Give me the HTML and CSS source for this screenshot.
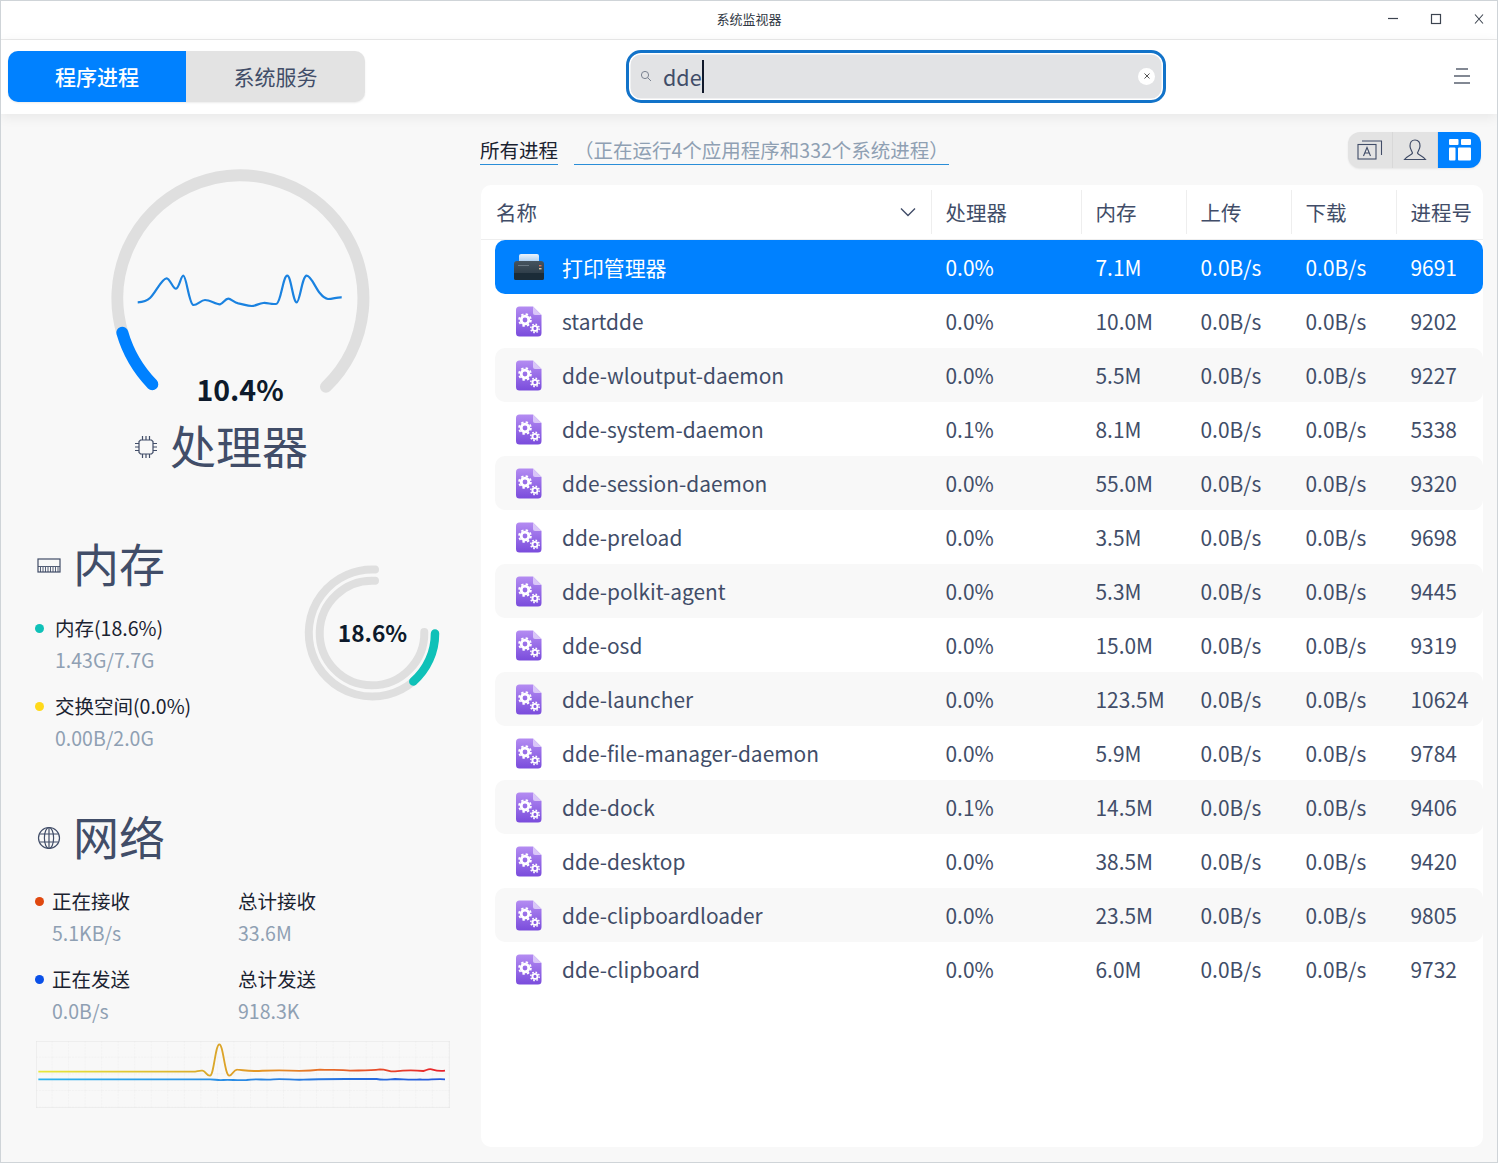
FILE: index.html
```html
<!DOCTYPE html>
<html lang="zh-CN">
<head>
    <meta charset="UTF-8">
    <meta name="viewport" content="width=device-width, initial-scale=1.0">
    <title>系统监视器</title>
    <link rel="stylesheet" href="styles.css">
</head>
<body>
    <!-- shared icons and gradients -->
    <svg class="sprites" aria-hidden="true">
        <defs>
            <linearGradient id="doc-fill" x1="0" y1="0" x2="0" y2="1">
                <stop offset="0" stop-color="#b48cf2"/>
                <stop offset="1" stop-color="#7a4cdc"/>
            </linearGradient>
            <linearGradient id="printer-body" x1="0" y1="0" x2="0" y2="1">
                <stop offset="0" stop-color="#46545f"/>
                <stop offset="1" stop-color="#22323e"/>
            </linearGradient>
            <linearGradient id="printer-paper" x1="0" y1="0" x2="0" y2="1">
                <stop offset="0" stop-color="#eaf3fc"/>
                <stop offset="1" stop-color="#a9cdf0"/>
            </linearGradient>
            <linearGradient id="net-recv" gradientUnits="userSpaceOnUse" x1="25" y1="0" x2="1245" y2="0">
                <stop offset="0" stop-color="#e6e83c"/>
                <stop offset="0.42" stop-color="#d9a92a"/>
                <stop offset="0.55" stop-color="#e59524"/>
                <stop offset="1" stop-color="#e8202c"/>
            </linearGradient>
            <linearGradient id="net-send" gradientUnits="userSpaceOnUse" x1="25" y1="0" x2="1245" y2="0">
                <stop offset="0" stop-color="#2cb4ee"/>
                <stop offset="0.5" stop-color="#2a8ae4"/>
                <stop offset="1" stop-color="#2458dc"/>
            </linearGradient>
            <pattern id="net-grid" patternUnits="userSpaceOnUse" x="18" y="15" width="49.6" height="50">
                <path d="M49.6 0V50M0 50H49.6" fill="none" stroke="#e6e6e6" stroke-width="2" stroke-dasharray="6 3"/>
            </pattern>
            <symbol id="doc-icon" viewBox="0 0 26 31">
                <path d="M3.5 .5H17L25.5 9V27a3.5 3.5 0 0 1-3.5 3.5H3.5A3.5 3.5 0 0 1 0 27V4A3.5 3.5 0 0 1 3.5 .5Z" fill="url(#doc-fill)"/>
                <path d="M17 .5L25.5 9H19a2 2 0 0 1-2-2Z" fill="#d9c6f8"/>
                <circle cx="9" cy="14" r="3.8" fill="none" stroke="#fff" stroke-width="2.8"/>
                <circle cx="9" cy="14" r="5.9" fill="none" stroke="#fff" stroke-width="1.8" stroke-dasharray="2.4 2.23"/>
                <circle cx="19" cy="22.4" r="2.5" fill="none" stroke="#fff" stroke-width="1.9"/>
                <circle cx="19" cy="22.4" r="4.2" fill="none" stroke="#fff" stroke-width="1.5" stroke-dasharray="1.6 1.7"/>
            </symbol>
            <symbol id="printer-icon" viewBox="0 0 32 28">
                <path d="M6 9V3a2 2 0 0 1 2-2H24a2 2 0 0 1 2 2V9Z" fill="url(#printer-paper)"/>
                <path d="M4 8H28a3 3 0 0 1 3 3V25a2 2 0 0 1-2 2H3a2 2 0 0 1-2-2V11A3 3 0 0 1 4 8Z" fill="url(#printer-body)"/>
                <path d="M1 20H31V25a2 2 0 0 1-2 2H3a2 2 0 0 1-2-2Z" fill="#1b2c38"/>
                <rect x="5" y="12" width="11" height="1" fill="#6a7883"/>
                <rect x="26" y="12" width="2.5" height="1.4" fill="#d8705a"/>
                <rect x="26" y="15" width="2.5" height="1.4" fill="#d9c7a0"/>
            </symbol>
        </defs>
    </svg>

    <div class="window">
        <div class="titlebar">
            <span class="titlebar__name">系统监视器</span>
            <div class="titlebar__btns">
                <svg width="12" height="12" viewBox="0 0 12 12"><path d="M1 5.5H11" stroke="#3c4450" stroke-width="1.2"/></svg>
                <svg width="12" height="12" viewBox="0 0 12 12"><rect x="1.5" y="1.5" width="9" height="9" fill="none" stroke="#3c4450" stroke-width="1.2"/></svg>
                <svg width="12" height="12" viewBox="0 0 12 12"><path d="M2 1.5L10 10.5M10 1.5L2 10.5" stroke="#3c4450" stroke-width="1.1"/></svg>
            </div>
        </div>

        <div class="toolbar">
            <div class="tabs">
                <div class="tabs__item tabs__item--on">程序进程</div>
                <div class="tabs__item">系统服务</div>
            </div>
            <div class="search">
                <svg class="search__icon" width="12" height="12" viewBox="0 0 12 12"><circle cx="5" cy="5" r="3.6" fill="none" stroke="#7a8290" stroke-width="1"/><path d="M7.7 7.7L11 11" stroke="#7a8290" stroke-width="1"/></svg>
                <span class="search__text">dde</span><span class="search__caret"></span>
                <span class="search__clear">
                    <svg width="8" height="8" viewBox="0 0 8 8"><path d="M1.5 1.5L6.5 6.5M6.5 1.5L1.5 6.5" stroke="#555" stroke-width="1"/></svg>
                </span>
            </div>
            <svg class="menu-btn" width="16" height="16" viewBox="0 0 16 16"><path d="M2 1H14M0 8H16M0 15H16" stroke="#5a6270" stroke-width="1.5"/></svg>
        </div>

        <div class="content">
            <div class="sidebar">
                <div class="cpu-gauge">
                    <svg width="300" height="250" viewBox="90 150 300 250">
                        <path d="M122.3 332.7A123 123 0 1 1 326 386.7" fill="none" stroke="#dfdfdf" stroke-width="12" stroke-linecap="round"/>
                        <path d="M122.3 332.7A123 123 0 0 0 152.3 384.3" fill="none" stroke="#0081ff" stroke-width="12" stroke-linecap="round"/>
                        <path d="M137.7 302.3C143 302 147 301 150 298C156 292 162 278 166.7 278.3C170 278.5 173 289 176 288.7C179 288.4 181 275.5 183.3 275.7C186.5 276 189 304 193.3 305C197 305.5 201 300 205 300C210 300 216 304.5 220 304.3C223 304 225 298.7 228.3 298.7C231 298.7 234 302.5 238.3 303.3C243 304 247 306 251.7 306C255 306 259 303.5 263.3 303C268 302.5 272 305 276.7 303.7C281 302 283 275.7 287.3 275.7C291 275.7 293 302.3 296.7 302.3C300 302.3 302 275.7 306.7 275.7C311 275.7 316 289 320 293.3C323 297 325 298.7 328 299C333 299 337 297 341.7 297.3" fill="none" stroke="#1a82e0" stroke-width="2.2"/>
                    </svg>
                    <span class="cpu-gauge__val">10.4%</span>
                </div>
                <div class="section-title section-title--cpu">
                    <svg width="24" height="24" viewBox="0 0 24 24" fill="none" stroke="#414d68" stroke-width="1.2">
                        <path d="M6.5 5H17.5L19 6.5V17.5L17.5 19H6.5L5 17.5V6.5Z"/>
                        <path d="M8.5 1V5M12 1V5M15.5 1V5M8.5 19V23M12 19V23M15.5 19V23M1 8.5H5M1 12H5M1 15.5H5M19 8.5H23M19 12H23M19 15.5H23"/>
                    </svg>
                    <h2>处理器</h2>
                </div>

                <div class="memory">
                    <div class="memory__info">
                        <div class="section-title">
                            <svg width="24" height="15" viewBox="0 0 24 15" fill="none" stroke="#414d68" stroke-width="1.2">
                                <rect x="1" y="1" width="22" height="13"/>
                                <path d="M1 8.5H23M3.5 9V14M6 9V14M8.5 9V14M11 9V14M13.5 9V14M16 9V14M18.5 9V14M21 9V14" stroke-width=".9"/>
                            </svg>
                            <h2>内存</h2>
                        </div>
                        <div class="legend">
                            <div class="stat">
                                <div class="stat__name"><i class="dot dot--teal"></i>内存(18.6%)</div>
                                <div class="stat__val">1.43G/7.7G</div>
                            </div>
                            <div class="stat">
                                <div class="stat__name"><i class="dot dot--yellow"></i>交换空间(0.0%)</div>
                                <div class="stat__val">0.00B/2.0G</div>
                            </div>
                        </div>
                    </div>
                    <div class="mem-ring">
                        <svg width="145" height="145" viewBox="300 560 145 145">
                            <path d="M375 569.6A63.5 63.5 0 1 0 413.3 681.5" fill="none" stroke="#dfdfdf" stroke-width="8" stroke-linecap="round"/>
                            <path d="M375 580.8A52.3 52.3 0 1 0 424.3 632" fill="none" stroke="#dfdfdf" stroke-width="8" stroke-linecap="round"/>
                            <path d="M435 633.5A63.5 63.5 0 0 1 413.3 681.5" fill="none" stroke="#0fc1b8" stroke-width="8.5" stroke-linecap="round"/>
                        </svg>
                        <span class="mem-ring__val">18.6%</span>
                    </div>
                </div>

                <div class="network">
                    <div class="section-title">
                        <svg width="24" height="24" viewBox="0 0 24 24" fill="none" stroke="#414d68" stroke-width="1.2">
                            <circle cx="12" cy="12" r="10.5"/>
                            <ellipse cx="12" cy="12" rx="4.6" ry="10.5"/>
                            <path d="M12 1.5V22.5M2.5 8H21.5M2.5 16H21.5"/>
                        </svg>
                        <h2>网络</h2>
                    </div>
                    <div class="net-stats">
                        <div class="stat">
                            <div class="stat__name stat__name--net"><i class="dot dot--orange"></i>正在接收</div>
                            <div class="stat__val stat__val--net">5.1KB/s</div>
                        </div>
                        <div class="stat">
                            <div class="stat__name">总计接收</div>
                            <div class="stat__val">33.6M</div>
                        </div>
                        <div class="stat">
                            <div class="stat__name stat__name--net"><i class="dot dot--blue"></i>正在发送</div>
                            <div class="stat__val stat__val--net">0.0B/s</div>
                        </div>
                        <div class="stat">
                            <div class="stat__name">总计发送</div>
                            <div class="stat__val">918.3K</div>
                        </div>
                    </div>
                    <svg class="net-chart" width="414" height="67" viewBox="18 15 1242 201">
                        <rect x="18" y="15" width="1242" height="201" fill="url(#net-grid)" stroke="#e4e4e4" stroke-width="3"/>
                        <path d="M25 107H490C500 107 510 102 518 104C528 106 530 120 540 119C552 118 556 25 568 25C580 25 584 119 598 119C608 119 610 100 622 101C640 102 650 106 680 105C710 104 740 102 780 104C810 105 840 105 870 101C900 103 930 100 960 104C990 103 1020 104 1050 100C1070 100 1080 108 1095 106C1120 103 1150 102 1180 105C1190 103 1195 97 1205 100C1215 103 1225 107 1245 104" fill="none" stroke="url(#net-recv)" stroke-width="5.5"/>
                        <path d="M25 130H540C555 130 565 134 580 132C600 130 620 134 650 132C680 127 700 133 730 130C760 127 790 133 820 131C860 128 920 129 1040 129C1060 133 1075 130 1095 129C1120 129 1140 133 1170 130C1190 133 1215 128 1245 130" fill="none" stroke="url(#net-send)" stroke-width="5.5"/>
                    </svg>
                </div>
            </div>

            <div class="main">
                <div class="main__head">
                    <span class="main__label main__label--title">所有进程</span>
                    <span class="main__label main__label--sub">（正在运行4个应用程序和332个系统进程）</span>
                    <div class="view-toggle">
                        <div class="view-toggle__btn">
                            <svg width="26" height="20" viewBox="0 0 26 20" fill="none" stroke="#414d68" stroke-width="1.1">
                                <rect x="1" y="4.5" width="18" height="14.5"/>
                                <path d="M5 1H24.5V15"/>
                                <path d="M6.5 16L10 7.5L13.5 16M7.8 13H12.2"/>
                            </svg>
                        </div>
                        <div class="view-toggle__btn">
                            <svg width="24" height="22" viewBox="0 0 24 22" fill="none" stroke="#414d68" stroke-width="1.2">
                                <path d="M12 1C8 1 7 4 7 7C7 10 9 12 9.5 14C9 16 4 17 1.5 20.5H22.5C20 17 15 16 14.5 14C15 12 17 10 17 7C17 4 16 1 12 1Z"/>
                            </svg>
                        </div>
                        <div class="view-toggle__btn view-toggle__btn--on">
                            <svg width="22" height="22" viewBox="0 0 22 22" fill="#fff">
                                <rect x="0" y="0" width="9.5" height="6" rx="1"/>
                                <rect x="12" y="0" width="10" height="6" rx="1"/>
                                <rect x="0" y="8.5" width="6.5" height="13" rx="1"/>
                                <rect x="9" y="8.5" width="13" height="13" rx="1"/>
                            </svg>
                        </div>
                    </div>
                </div>

                <div class="proc-table">
                    <div class="proc-head">
                        <div class="proc-head__cell proc-head__cell--name">名称
                            <svg width="16" height="10" viewBox="0 0 16 10"><path d="M1 1.5L8 8.5L15 1.5" fill="none" stroke="#414d68" stroke-width="1.4"/></svg>
                        </div>
                        <div class="proc-head__cell">处理器</div>
                        <div class="proc-head__cell">内存</div>
                        <div class="proc-head__cell">上传</div>
                        <div class="proc-head__cell">下载</div>
                        <div class="proc-head__cell">进程号</div>
                    </div>

                    <div class="proc-row proc-row--on">
                        <div class="proc-row__name"><span class="proc-row__icon"><svg width="32" height="28"><use href="#printer-icon"/></svg></span>打印管理器</div>
                        <div>0.0%</div><div>7.1M</div><div>0.0B/s</div><div>0.0B/s</div><div>9691</div>
                    </div>
                    <div class="proc-row">
                        <div class="proc-row__name"><span class="proc-row__icon"><svg width="26" height="31"><use href="#doc-icon"/></svg></span>startdde</div>
                        <div>0.0%</div><div>10.0M</div><div>0.0B/s</div><div>0.0B/s</div><div>9202</div>
                    </div>
                    <div class="proc-row">
                        <div class="proc-row__name"><span class="proc-row__icon"><svg width="26" height="31"><use href="#doc-icon"/></svg></span>dde-wloutput-daemon</div>
                        <div>0.0%</div><div>5.5M</div><div>0.0B/s</div><div>0.0B/s</div><div>9227</div>
                    </div>
                    <div class="proc-row">
                        <div class="proc-row__name"><span class="proc-row__icon"><svg width="26" height="31"><use href="#doc-icon"/></svg></span>dde-system-daemon</div>
                        <div>0.1%</div><div>8.1M</div><div>0.0B/s</div><div>0.0B/s</div><div>5338</div>
                    </div>
                    <div class="proc-row">
                        <div class="proc-row__name"><span class="proc-row__icon"><svg width="26" height="31"><use href="#doc-icon"/></svg></span>dde-session-daemon</div>
                        <div>0.0%</div><div>55.0M</div><div>0.0B/s</div><div>0.0B/s</div><div>9320</div>
                    </div>
                    <div class="proc-row">
                        <div class="proc-row__name"><span class="proc-row__icon"><svg width="26" height="31"><use href="#doc-icon"/></svg></span>dde-preload</div>
                        <div>0.0%</div><div>3.5M</div><div>0.0B/s</div><div>0.0B/s</div><div>9698</div>
                    </div>
                    <div class="proc-row">
                        <div class="proc-row__name"><span class="proc-row__icon"><svg width="26" height="31"><use href="#doc-icon"/></svg></span>dde-polkit-agent</div>
                        <div>0.0%</div><div>5.3M</div><div>0.0B/s</div><div>0.0B/s</div><div>9445</div>
                    </div>
                    <div class="proc-row">
                        <div class="proc-row__name"><span class="proc-row__icon"><svg width="26" height="31"><use href="#doc-icon"/></svg></span>dde-osd</div>
                        <div>0.0%</div><div>15.0M</div><div>0.0B/s</div><div>0.0B/s</div><div>9319</div>
                    </div>
                    <div class="proc-row">
                        <div class="proc-row__name"><span class="proc-row__icon"><svg width="26" height="31"><use href="#doc-icon"/></svg></span>dde-launcher</div>
                        <div>0.0%</div><div>123.5M</div><div>0.0B/s</div><div>0.0B/s</div><div>10624</div>
                    </div>
                    <div class="proc-row">
                        <div class="proc-row__name"><span class="proc-row__icon"><svg width="26" height="31"><use href="#doc-icon"/></svg></span>dde-file-manager-daemon</div>
                        <div>0.0%</div><div>5.9M</div><div>0.0B/s</div><div>0.0B/s</div><div>9784</div>
                    </div>
                    <div class="proc-row">
                        <div class="proc-row__name"><span class="proc-row__icon"><svg width="26" height="31"><use href="#doc-icon"/></svg></span>dde-dock</div>
                        <div>0.1%</div><div>14.5M</div><div>0.0B/s</div><div>0.0B/s</div><div>9406</div>
                    </div>
                    <div class="proc-row">
                        <div class="proc-row__name"><span class="proc-row__icon"><svg width="26" height="31"><use href="#doc-icon"/></svg></span>dde-desktop</div>
                        <div>0.0%</div><div>38.5M</div><div>0.0B/s</div><div>0.0B/s</div><div>9420</div>
                    </div>
                    <div class="proc-row">
                        <div class="proc-row__name"><span class="proc-row__icon"><svg width="26" height="31"><use href="#doc-icon"/></svg></span>dde-clipboardloader</div>
                        <div>0.0%</div><div>23.5M</div><div>0.0B/s</div><div>0.0B/s</div><div>9805</div>
                    </div>
                    <div class="proc-row">
                        <div class="proc-row__name"><span class="proc-row__icon"><svg width="26" height="31"><use href="#doc-icon"/></svg></span>dde-clipboard</div>
                        <div>0.0%</div><div>6.0M</div><div>0.0B/s</div><div>0.0B/s</div><div>9732</div>
                    </div>
                </div>
            </div>
        </div>
    </div>
</body>
</html>
```

FILE: styles.css
```css
* {
    box-sizing: border-box;
}
body {
    margin: 0;
    font-family: "Noto Sans CJK SC", "Noto Sans", sans-serif;
    color: #414d68;
    background: #fff;
}
.sprites {
    position: absolute;
    width: 0;
    height: 0;
}
.window {
    width: 1498px;
    height: 1163px;
    border: 1px solid #cfd4d8;
    display: flex;
    flex-direction: column;
    overflow: hidden;
}

/* title bar */
.titlebar {
    position: relative;
    height: 39px;
    flex: none;
    border-bottom: 1px solid #eaeaea;
    padding-bottom: 3px;
    display: flex;
    align-items: center;
    justify-content: center;
    background: #fff;
}
.titlebar__name {
    font-size: 13px;
    color: #303844;
}
.titlebar__btns {
    position: absolute;
    right: 12px;
    top: 12px;
    display: flex;
    gap: 31px;
}

/* tabs + search */
.toolbar {
    height: 74px;
    flex: none;
    padding-bottom: 2px;
    display: grid;
    grid-template-columns: 625px 540px 1fr;
    align-items: center;
    background: #fff;
    box-shadow: 0 3px 12px rgba(0, 0, 0, .07);
    position: relative;
}
.tabs {
    margin-left: 7px;
    width: 357px;
    height: 51px;
    display: flex;
    border-radius: 10px;
    background: #e3e3e3;
    overflow: hidden;
    box-shadow: 0 1px 2px rgba(0, 0, 0, .08);
}
.tabs__item {
    flex: 1;
    display: flex;
    align-items: center;
    justify-content: center;
    font-size: 21px;
}
.tabs__item--on {
    flex: none;
    width: 178px;
    background: #0081ff;
    color: #fff;
    font-weight: 500;
}
.search {
    height: 53px;
    border: 3px solid #1273c9;
    border-radius: 15px;
    background: #e2e3e5;
    box-shadow: inset 0 0 0 1.5px #fff;
    display: flex;
    align-items: center;
    padding-left: 11px;
    position: relative;
}
.search__icon {
    margin-right: 11px;
}
.search__text {
    font-size: 21.5px;
    line-height: 33px;
}
.search__caret {
    width: 2px;
    height: 33px;
    background: #10182a;
}
.search__clear {
    position: absolute;
    right: 8px;
    top: 15px;
    width: 17px;
    height: 17px;
    border-radius: 50%;
    background: #fff;
    display: flex;
    align-items: center;
    justify-content: center;
}
.menu-btn {
    justify-self: end;
    margin-right: 27px;
}

.content {
    flex: 1;
    display: flex;
    background: #f8f8f8;
    min-height: 0;
}

/* left column */
.sidebar {
    width: 480px;
    flex: none;
    padding-top: 36px;
}
.cpu-gauge {
    position: relative;
    width: 300px;
    height: 250px;
    margin-left: 89px;
}
.cpu-gauge svg {
    display: block;
}
.cpu-gauge__val {
    position: absolute;
    left: 0;
    right: 0;
    top: 221px;
    text-align: center;
    font-size: 28.5px;
    line-height: 36px;
    font-weight: 700;
    color: #0d1a2b;
}
.section-title {
    display: flex;
    align-items: center;
    gap: 12px;
    height: 60px;
}
.section-title h2 {
    margin: 0 0 7px;
    font-size: 46px;
    line-height: 60px;
    font-weight: 400;
}
.section-title--cpu {
    margin: 17px 0 0 133px;
}
.memory {
    display: flex;
    margin-top: 58px;
    padding-left: 36px;
}
.memory__info {
    width: 263px;
}
.legend {
    margin: 17px 0 0 -2px;
    display: flex;
    flex-direction: column;
    gap: 14px;
}
.stat__name {
    display: flex;
    align-items: center;
    font-size: 19.5px;
    line-height: 32px;
    color: #1a2230;
    white-space: nowrap;
    padding-left: 20px;
}
.stat__val {
    font-size: 19.5px;
    line-height: 32px;
    color: #8fa0b3;
    padding-left: 20px;
}
.dot {
    width: 9px;
    height: 9px;
    border-radius: 50%;
    margin: 0 11px 0 -20px;
    flex: none;
}
.dot--teal { background: #0fc1b8; }
.dot--yellow { background: #ffd91a; }
.dot--orange { background: #e0480f; }
.dot--blue { background: #0a50e8; }
.mem-ring {
    position: relative;
    width: 145px;
    height: 145px;
    margin-top: 25px;
}
.mem-ring svg {
    display: block;
}
.mem-ring__val {
    position: absolute;
    left: 0;
    right: 0;
    top: 55px;
    text-align: center;
    font-size: 22.7px;
    line-height: 36px;
    font-weight: 700;
    color: #0d1a2b;
}
.network {
    margin-top: 54px;
    padding-left: 36px;
}
.net-stats {
    margin: 17px 0 0 -2px;
    display: grid;
    grid-template-columns: 203px 1fr;
    row-gap: 14px;
}
.net-stats .stat__name,
.net-stats .stat__val {
    padding-left: 0;
}
.net-stats .stat__name--net,
.net-stats .stat__val--net {
    padding-left: 17px;
}
.stat__name--net .dot {
    margin: 0 8px 0 -17px;
}
.net-chart {
    display: block;
    margin: 14px 0 0 -1px;
}

/* right column */
.main {
    flex: 1;
    min-width: 0;
    padding: 18px 14px 15px 0;
    display: flex;
    flex-direction: column;
}
.main__head {
    height: 36px;
    display: flex;
    align-items: flex-end;
    flex: none;
}
.main__label {
    font-size: 19.5px;
    line-height: 29px;
    margin-bottom: 3px;
    border-bottom: 1px solid #2a8ed8;
    white-space: nowrap;
}
.main__label--title {
    color: #1a2230;
    width: 78px;
    margin-left: -1px;
}
.main__label--sub {
    color: #8fa0b3;
    margin-left: 16px;
}
.view-toggle {
    margin-left: auto;
    margin-right: 2px;
    width: 133px;
    height: 36px;
    display: flex;
    border-radius: 12px;
    overflow: hidden;
    background: #e3e3e3;
    box-shadow: 0 1px 2px rgba(0, 0, 0, .08);
}
.view-toggle__btn {
    width: 45px;
    display: flex;
    align-items: center;
    justify-content: center;
    border-right: 1px solid #d8d8d8;
}
.view-toggle__btn--on {
    width: 43px;
    border-right: 0;
    background: #0081ff;
}
.proc-table {
    flex: 1;
    margin-top: 17px;
    background: #fff;
    border-radius: 10px;
}
.proc-head,
.proc-row {
    display: grid;
    grid-template-columns: 436px 150px 105px 105px 105px 87px;
    margin-left: 14px;
}
.proc-head {
    height: 55px;
    margin-left: 0;
    grid-template-columns: 450px 150px 105px 105px 105px 87px;
    border-bottom: 1px solid #eee;
    align-items: center;
}
.proc-head__cell {
    height: 44px;
    display: flex;
    align-items: center;
    padding-left: 13.5px;
    border-left: 1px solid #eee;
    font-size: 20.5px;
}
.proc-head__cell--name {
    border-left: 0;
    padding: 0 15px;
    justify-content: space-between;
}
.proc-row {
    height: 54px;
    align-items: center;
    font-size: 20.9px;
    border-radius: 10px;
}
.proc-row > div {
    padding-left: 14.5px;
    white-space: nowrap;
}
.proc-row .proc-row__name {
    display: flex;
    align-items: center;
    padding-left: 18px;
}
.proc-row__icon {
    width: 32px;
    margin-right: 17px;
    display: flex;
    justify-content: center;
}
.proc-row:nth-child(even) {
    background: #f8f8f8;
}
.proc-row.proc-row--on {
    background: #0081ff;
    color: #fff;
}
```
